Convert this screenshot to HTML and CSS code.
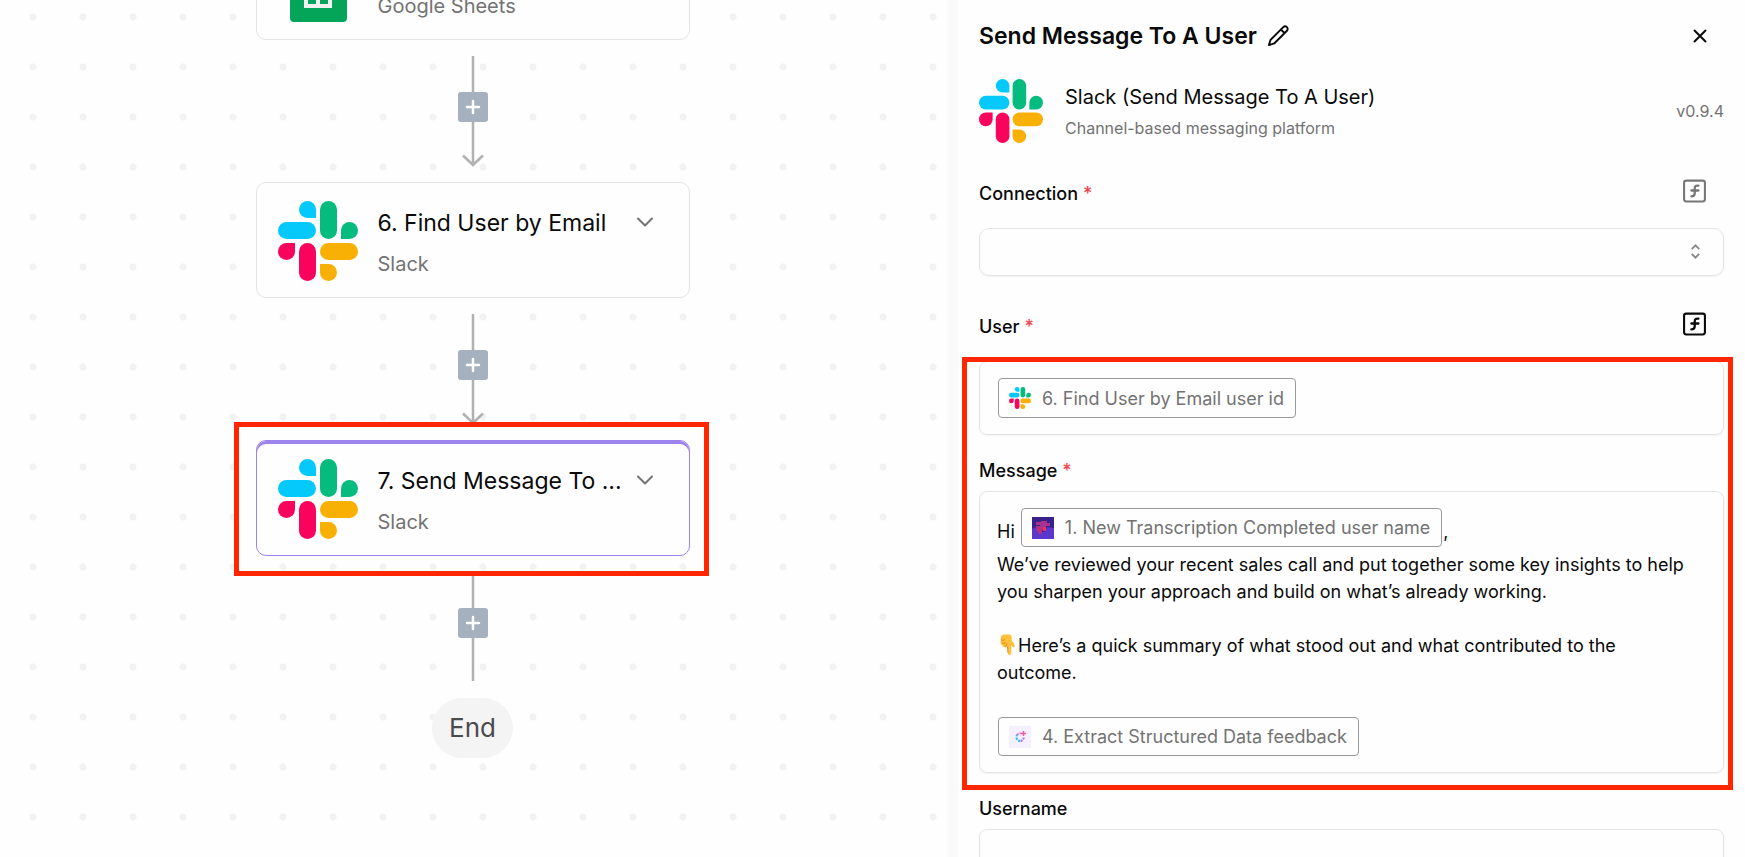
FILE: index.html
```html
<!DOCTYPE html>
<html lang="en">
<head>
<meta charset="utf-8">
<meta name="viewport" content="width=device-width, initial-scale=1">
<title>Send Message To A User</title>
<link rel="stylesheet" href="styles.css">
</head>
<body>
<svg class="sprite" aria-hidden="true">
  <symbol id="slack" viewBox="0 0 80 80">
    <path fill="#06c9fb" d="M29.500 0A8.400 8.400 0 0 0 29.500 17H38V8.500A8.500 8.500 0 0 0 29.500 0Z"/>
    <rect fill="#06c9fb" x="0" y="21" width="38" height="17" rx="8.500"/>
    <rect fill="#05bb7d" x="42" y="0" width="17" height="38" rx="8.500"/>
    <path fill="#05bb7d" d="M80 29.500A8.500 8.500 0 0 0 63 29.500V38H71.500A8.500 8.500 0 0 0 80 29.500Z"/>
    <path fill="#f9035c" d="M0 50.500A8.500 8.500 0 0 0 17 50.500V42H8.500A8.500 8.500 0 0 0 0 50.500Z"/>
    <rect fill="#f9035c" x="21" y="42" width="17" height="38" rx="8.500"/>
    <rect fill="#f9b004" x="42" y="42" width="38" height="17" rx="8.500"/>
    <path fill="#f9b004" d="M50.500 80A8.500 8.500 0 0 0 50.500 63H42V71.500A8.500 8.500 0 0 0 50.500 80Z"/>
  </symbol>
  <symbol id="chevron" viewBox="0 0 24 24">
    <path d="M5 8.500 12 15.500 19 8.500" fill="none" stroke="currentColor" stroke-width="2" stroke-linecap="round" stroke-linejoin="round"/>
  </symbol>
  <symbol id="plus" viewBox="0 0 30 30">
    <path d="M15 9V21M9 15H21" fill="none" stroke="currentColor" stroke-width="2.500" stroke-linecap="round"/>
  </symbol>
  <symbol id="function" viewBox="0 0 24 24">
    <g fill="none" stroke="currentColor" stroke-width="2" stroke-linecap="round" stroke-linejoin="round">
      <rect x="2" y="2" width="20" height="20" rx="2"/>
      <path d="M9 17.200C11 17.200 12.200 16.600 12.200 14.500V9.500C12.200 7.400 13.300 6.500 15.800 6.900M9 11.500H15.800" stroke-width="2.200"/>
    </g>
  </symbol>
</svg>

<div class="builder">
  <main class="canvas">
    <div class="flow">
      <article class="step step-partial">
        <svg class="step-icon" viewBox="0 0 80 80" aria-hidden="true">
          <path fill="#04a558" d="M16 0H48L69 21V75A4 4 0 0 1 65 79H16A4 4 0 0 1 12 75V4A4 4 0 0 1 16 0Z"/>
          <path fill="#f1f1f1" fill-rule="evenodd" d="M26 37H54V65H26ZM30 41V48H38V41ZM42 41V48H50V41ZM30 52V61H38V52ZM42 52V61H50V52Z"/>
        </svg>
        <div class="step-text">
          <p class="step-app">Google Sheets</p>
        </div>
      </article>

      <div class="link">
        <svg class="link-line" viewBox="0 0 24 142" aria-hidden="true"><path d="M12 16V125M2 115.500 12 125 22 115.500"/></svg>
        <button class="add" type="button" aria-label="Add step"><svg><use href="#plus"/></svg></button>
      </div>

      <article class="step">
        <svg class="step-icon" aria-hidden="true"><use href="#slack"/></svg>
        <div class="step-text">
          <h2 class="step-title">6. Find User by Email</h2>
          <p class="step-app">Slack</p>
        </div>
        <button class="step-menu" type="button" aria-label="Step options"><svg><use href="#chevron"/></svg></button>
      </article>

      <div class="link">
        <svg class="link-line" viewBox="0 0 24 142" aria-hidden="true"><path d="M12 16V125M2 115.500 12 125 22 115.500"/></svg>
        <button class="add" type="button" aria-label="Add step"><svg><use href="#plus"/></svg></button>
      </div>

      <article class="step step-selected">
        <svg class="step-icon" aria-hidden="true"><use href="#slack"/></svg>
        <div class="step-text">
          <h2 class="step-title">7. Send Message To ...</h2>
          <p class="step-app">Slack</p>
        </div>
        <button class="step-menu" type="button" aria-label="Step options"><svg><use href="#chevron"/></svg></button>
      </article>

      <div class="link">
        <svg class="link-line" viewBox="0 0 24 142" aria-hidden="true"><path d="M12 16V125"/></svg>
        <button class="add" type="button" aria-label="Add step"><svg><use href="#plus"/></svg></button>
      </div>

      <div class="end">End</div>
    </div>
  </main>

  <div class="divider"></div>

  <aside class="panel">
    <header class="panel-head">
      <h1 class="panel-title">Send Message To A User</h1>
      <button class="icon-button" type="button" aria-label="Rename step">
        <svg class="pencil" viewBox="0 0 24 24"><path d="M17 3.200A2.600 2.600 0 0 1 20.800 7L7.500 20.300 2 22 3.700 16.500ZM14.500 5.700 18.300 9.500"/></svg>
      </button>
      <button class="icon-button close" type="button" aria-label="Close">
        <svg viewBox="0 0 24 24"><path d="M6.500 6.500 17.500 17.500M17.500 6.500 6.500 17.500"/></svg>
      </button>
    </header>

    <section class="piece">
      <svg class="piece-icon" aria-hidden="true"><use href="#slack"/></svg>
      <div class="piece-text">
        <p class="piece-name">Slack (Send Message To A User)</p>
        <p class="piece-about">Channel-based messaging platform</p>
      </div>
      <span class="version">v0.9.4</span>
    </section>

    <form class="form">
      <div class="field-head">
        <label class="label" for="connection">Connection <span class="required">*</span></label>
        <button class="function muted" type="button" aria-label="Dynamic value"><svg><use href="#function"/></svg></button>
      </div>
      <div class="select-wrap">
        <select class="box select" id="connection"><option></option></select>
        <svg class="select-arrows" viewBox="0 0 16 16" aria-hidden="true"><path d="M4 5.500 8 1.500 12 5.500M4 10.500 8 14.500 12 10.500"/></svg>
      </div>

      <div class="field-head">
        <span class="label" id="user-label">User <span class="required">*</span></span>
        <button class="function" type="button" aria-label="Dynamic value"><svg><use href="#function"/></svg></button>
      </div>
      <div class="highlight">
        <div class="box editor" role="textbox" contenteditable="true" aria-labelledby="user-label">
          <p class="chip-line"><span class="chip chip-tall"><svg><use href="#slack"/></svg>6. Find User by Email user id</span></p>
        </div>

        <span class="label label-block" id="message-label">Message <span class="required">*</span></span>
        <div class="box editor" role="textbox" contenteditable="true" aria-multiline="true" aria-labelledby="message-label">
          <p class="chip-line">Hi <span class="chip"><svg viewBox="0 0 22 22">
            <rect width="22" height="22" fill="#39208a"/>
            <path d="M0 12 3 10 5 14 13 15 15 10 22 11V22H0Z" fill="#5b37cb"/>
            <path d="M4 5H9V4H15V6H18V9H14V13H10V17H6V14H4V9H8V8H4Z" fill="#a8328f"/>
            <path d="M5 10H9V14H5Z" fill="#b92f78"/><path d="M11 10H14V14H11Z" fill="#f0305f"/>
          </svg>1. New Transcription Completed user name</span>,</p>
          <p>We’ve reviewed your recent sales call and put together some key insights to help you sharpen your approach and build on what’s already working.</p>
          <p><br></p>
          <p><svg class="emoji" viewBox="0 0 21 22" role="img" aria-label="Pointing down">
            <path fill="#fdc13c" d="M4 2.500Q4.500.500 7 .500H12Q14.500.500 14.500 3L15 7Q17.500 9 17.800 12 17.500 13.800 15.800 13L14.300 11V19.500Q13.500 22 11.500 21 10.800 20 10.500 12.500 9 14 7.500 13 5.500 13 5.200 11 3.500 10.500 3.500 8.500Z"/>
            <path fill="none" stroke="#e08a1e" d="M4 5.500Q6 7.500 8 5.500M5 9Q7 10.500 9 8.500M7.500 12Q10 12 10 9.500M10.500 12.500 11 19"/>
          </svg>Here’s a quick summary of what stood out and what contributed to the outcome.</p>
          <p><br></p>
          <p class="chip-line"><span class="chip"><svg viewBox="0 0 22 22">
            <rect width="22" height="22" fill="#f4f0ff"/>
            <path d="M14.800 11.500A4 4 0 0 1 11 15" fill="none" stroke="#a879f2" stroke-width="2" stroke-dasharray="2 1"/>
            <path d="M11 15A4 4 0 0 1 8 9" fill="none" stroke="#22b8f5" stroke-width="2" stroke-dasharray="2 1"/>
            <path d="M8 9A4 4 0 0 1 12 7.500" fill="none" stroke="#b77cf0" stroke-width="2" stroke-dasharray="2 1"/>
            <path d="M14.500 5V10M12 7.500H17" stroke="#f45a95" stroke-width="1.500"/>
          </svg>4. Extract Structured Data feedback</span></p>
        </div>
      </div>

      <label class="label label-block" for="username">Username</label>
      <input class="box input" id="username" type="text">
    </form>
  </aside>
</div>
</body>
</html>
```

FILE: styles.css
```css
* {
  box-sizing: border-box;
}

body,
h1,
h2,
p {
  margin: 0;
}

body {
  font-family: Inter, "Liberation Sans", sans-serif;
  color: #0a0a0a;
  background: #fefefe;
}

button {
  padding: 0;
  border: 0;
  background: none;
  color: inherit;
  cursor: pointer;
}

svg {
  display: block;
}

.sprite {
  position: absolute;
  width: 0;
  height: 0;
}

.builder {
  display: grid;
  grid-template-columns: minmax(0, 1fr) 11px 45.1%;
  height: 100vh;
  overflow: hidden;
}

/* Canvas */

.canvas {
  overflow: hidden;
  background: radial-gradient(circle, #f2f2f2 3px, transparent 4px) 8px -8px / 50px 50px;
}

.flow {
  display: flex;
  flex-direction: column;
  align-items: center;
  margin-top: -76px;
  padding-right: 2px;
}

.step {
  position: relative;
  display: flex;
  align-items: flex-start;
  width: 434px;
  max-width: 100%;
  height: 116px;
  padding: 18px 32px 0 21px;
  border: 1px solid #e4e4e7;
  border-radius: 10px;
  background: #fefefe;
}

.step-icon {
  flex: none;
  width: 80px;
  height: 80px;
  margin-right: 20px;
}

.step-text {
  flex: 1;
  min-width: 0;
}

.step-partial .step-text {
  padding-top: 44px;
}

.step-title {
  font-size: 23px;
  font-weight: 400;
  line-height: 44px;
  white-space: nowrap;
}

.step-app {
  font-size: 20px;
  line-height: 38px;
  color: #737373;
}

.step-menu {
  flex: none;
  margin-top: 9px;
  color: #737373;
}

.step-menu svg {
  width: 24px;
  height: 24px;
}

.step-selected {
  border-color: #9e82ee;
  box-shadow: inset 0 3px #9e82ee;
}

.step-selected::after {
  content: "";
  position: absolute;
  inset: -19px -20px -21px -23px;
  border: 5px solid #ff2600;
  pointer-events: none;
}

.link {
  display: grid;
  place-items: center;
  height: 142px;
}

.link > * {
  grid-area: 1 / 1;
}

.link-line {
  width: 24px;
  height: 142px;
  fill: none;
  stroke: #b1b1b4;
  stroke-width: 2.500px;
}

.add {
  z-index: 1;
  align-self: start;
  margin-top: 52px;
  border-radius: 3px;
  background: #a6b1bf;
  color: #fff;
}

.add svg {
  width: 30px;
  height: 30px;
}

.end {
  padding: 0 17px;
  border-radius: 30px;
  background: #f4f4f4;
  color: #4b4b4e;
  font-size: 26px;
  line-height: 60px;
}

/* Divider between canvas and settings */

.divider {
  background: #fafafa;
}

/* Settings panel */

.panel {
  min-width: 0;
  padding: 0 21px;
}

.panel-head {
  display: flex;
  align-items: center;
  gap: 10px;
  height: 71px;
}

.panel-title {
  font-size: 23px;
  font-weight: 600;
  line-height: 32px;
}

.icon-button svg {
  width: 24px;
  height: 24px;
  fill: none;
  stroke: currentColor;
  stroke-width: 2px;
  stroke-linecap: round;
  stroke-linejoin: round;
}

.icon-button .pencil {
  width: 23px;
  height: 23px;
}

.close {
  margin: 0 12px 0 auto;
}

.piece {
  display: flex;
  align-items: center;
  gap: 22px;
  margin-top: 8px;
}

.piece-icon {
  flex: none;
  width: 64px;
  height: 64px;
}

.piece-text {
  flex: 1;
  padding-top: 2px;
}

.piece-name {
  font-size: 20px;
  line-height: 32px;
}

.piece-about {
  font-size: 16px;
  line-height: 30px;
  color: #737373;
}

.version {
  font-size: 16px;
  line-height: 20px;
  color: #737373;
}

.field-head {
  display: flex;
  align-items: flex-end;
  justify-content: space-between;
  height: 32px;
  margin: 32px 0 21px;
}

.label {
  font-size: 18px;
  font-weight: 500;
  line-height: 26px;
}

.label-block {
  display: block;
  margin: 23px 0 7px;
}

.required {
  color: #f0444c;
}

.function {
  align-self: flex-start;
  margin-right: 17px;
}

.function svg {
  width: 25px;
  height: 32px;
}

.muted {
  color: #77777a;
}

.box {
  display: block;
  width: 100%;
  border: 1px solid #e4e4e7;
  border-radius: 8px;
  background: transparent;
  color: inherit;
  font: inherit;
  box-shadow: 0 1px 2px rgb(0 0 0 / 5%);
}

.select-wrap {
  position: relative;
}

.select {
  height: 48px;
  border-radius: 10px;
  appearance: none;
}

.select-arrows {
  position: absolute;
  top: 16px;
  right: 21px;
  width: 15px;
  height: 15px;
  fill: none;
  stroke: #8a8a8a;
  stroke-width: 2px;
  pointer-events: none;
}

.highlight {
  position: relative;
}

.highlight::after {
  content: "";
  position: absolute;
  inset: -4px -9px -17px -17px;
  border: 5px solid #ff2600;
  pointer-events: none;
}

.editor {
  padding: 16px 30px 16px 17px;
  font-size: 18px;
  line-height: 27px;
}

.chip-line + p,
p + .chip-line {
  margin-top: 4px;
}

.chip {
  display: inline-flex;
  align-items: center;
  gap: 11px;
  height: 39px;
  margin: 0 1px;
  padding: 0 11px 0 10px;
  border: 1px solid #9a9a9c;
  border-radius: 4px;
  color: #737373;
  vertical-align: -1px;
}

.chip-tall {
  height: 40px;
}

.chip svg {
  width: 22px;
  height: 22px;
}

.emoji {
  display: inline-block;
  width: 21px;
  height: 22px;
  vertical-align: -4px;
}

.input {
  height: 48px;
  padding: 0 17px;
}
```
